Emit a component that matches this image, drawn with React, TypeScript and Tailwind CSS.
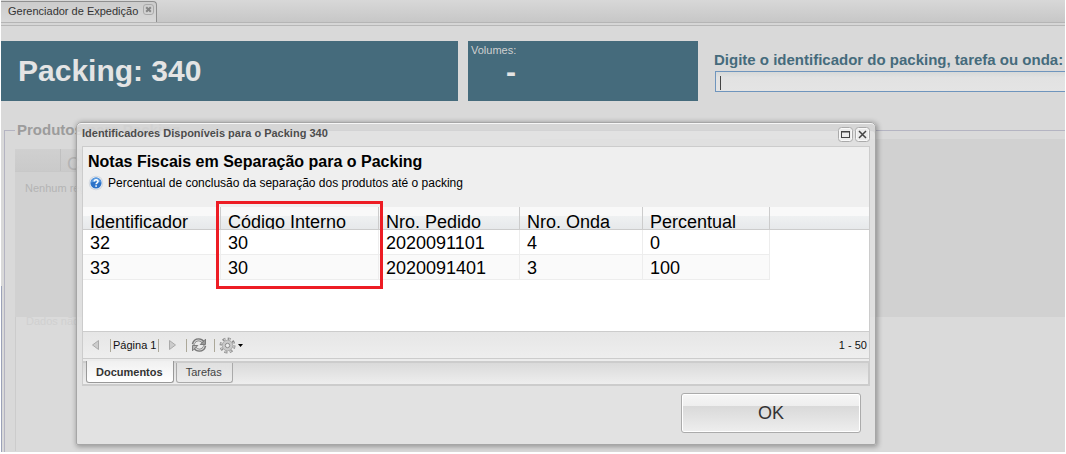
import React, { useState } from 'react';

const COLUMNS = [
    { label: 'Identificador', width: 'w-[138px]' },
    { label: 'Código Interno', width: 'w-[158px]' },
    { label: 'Nro. Pedido', width: 'w-[141px]' },
    { label: 'Nro. Onda', width: 'w-[123px]' },
    { label: 'Percentual', width: 'w-[127px]' },
];

const ROWS = [
    ['32', '30', '2020091101', '4', '0'],
    ['33', '30', '2020091401', '3', '100'],
];

export default function App() {
    return (
        <div className="relative min-h-screen flex flex-col bg-white px-px pb-[2px] overflow-hidden font-['Liberation_Sans',Arial,sans-serif] text-[11px]">
            <div className="flex-1 flex flex-col bg-[#d9d9d9] overflow-hidden">
                <WorkspaceTabs />
                <PackingHeader />
                <ProductsArea />
            </div>
            <PackingDialog />
        </div>
    );
}

const WorkspaceTabs = () => (
    <div className="h-[26px] flex flex-col border-b border-[#b7b7b7] bg-[#d6d6d6]">
        <div className="h-[23px] flex items-end border-b border-[#b5b5b5] bg-linear-to-b from-[#d8d8d8] to-[#c7c7c7]">
            <div className="h-[21px] flex items-start gap-[5px] pl-[7px] pr-[2px] rounded-tr-[4px] border-t border-r border-[#8f8f8f] bg-linear-to-b from-[#cccccc] to-[#d8d8d8]">
                <span className="mt-[2px] leading-[14px] text-[#333333]">Gerenciador de Expedição</span>
                <button aria-label="Fechar aba" className="mt-[2px] text-[#858585]">
                    <svg width="11" height="11" viewBox="0 0 11 11" fill="none">
                        <rect x=".5" y=".5" width="10" height="10" rx="2.5" stroke="#aaaaaa" />
                        <path d="M3.2 3.2l4.6 4.6M7.8 3.2L3.2 7.8" stroke="currentColor" strokeWidth="2" />
                    </svg>
                </button>
            </div>
        </div>
    </div>
);

const PackingHeader = () => (
    <div className="mt-[15px] grid grid-cols-[457fr_230fr_357fr] gap-[10px] h-[60px] shrink-0">
        <div className="flex items-center bg-[#456b7c] pl-[17px]">
            <h1 className="text-[30px] leading-9 font-bold text-[#e4e4e4]">Packing: 340</h1>
        </div>
        <div className="bg-[#456b7c] pl-[3px] pt-[3px] text-[#d0d0d0]">
            <div className="leading-[13px]">Volumes:</div>
            <div className="pl-[35px] text-[30px] leading-[30px] font-bold text-[#e4e4e4]">-</div>
        </div>
        <div className="min-w-0 pl-[6px] pt-[10px]">
            <label htmlFor="packing-id" className="block text-[15px] leading-[18px] font-bold text-[#456b7c] whitespace-nowrap">Digite o identificador do packing, tarefa ou onda:</label>
            <div className="relative mt-[2px] ml-px">
                <input id="packing-id" type="text" className="block w-full h-[21px] px-1 border border-r-0 border-[#6f95bd] bg-linear-to-b from-[#d6d9d9] via-[#e2e2e2] via-30% to-[#e4e4e4] outline-none" />
                {/* text cursor */}
                <span className="absolute left-[5px] top-[5px] w-px h-[14px] bg-[#444444]" />
            </div>
        </div>
    </div>
);

const ProductsArea = () => (
    <div className="flex-1 flex mt-5">
        <div className="w-[3px] mt-[165px] border-l border-[#9ba2b8]" />
        <fieldset className="flex-1 min-w-0 pl-[10px] border-t border-l border-[#b4b4c2]">
            <legend className="px-[2px] text-[15px] leading-[18px] font-bold text-[#9c9c9c]">Produtos para Packing</legend>
            <div className="flex">
                <div className="w-1/2 mt-[10px] h-[168px] bg-[#d1d1d1] text-[#b4b4b4]">
                    <div className="flex h-[23px] bg-linear-to-b from-[#d0d0d0] to-[#cacaca] border-b border-[#c8c8c8] overflow-hidden">
                        <div className="w-[46px] border-r border-[#c0c0c0]" />
                        <div className="pl-[6px] pt-[5px] text-[18px] leading-5">C</div>
                    </div>
                    <div className="pl-[10px] pt-[9px] leading-[14px]">Nenhum registro</div>
                </div>
                <div className="w-1/2 h-[178px] bg-[#d1d1d1]" />
            </div>
            <div className="h-[134px] border-l border-[#cccccc] bg-[#dadada] pl-[10px] text-[#d0d0d0] leading-[8px] overflow-hidden">Dados não encontrados</div>
        </fieldset>
    </div>
);

const PackingDialog = () => (
    <div role="dialog" aria-labelledby="dialog-title" className="absolute left-[76px] top-[122px] w-[800px] flex flex-col px-[5px] pb-[11px] rounded-t-[5px] rounded-b-[2px] border border-[#a6a6a6] bg-[#e3e3e3]/85 shadow-[1px_1px_5px_1px_rgba(0,0,0,0.3),inset_0_1px_0_#f6f6f6,inset_0_8px_0_#cacaca80]">
        <div className="h-[23px] flex items-start justify-between">
            <h2 id="dialog-title" className="pt-[3px] leading-[14px] font-bold text-[#4d4d4d]">Identificadores Disponíveis para o Packing 340</h2>
            <div className="flex gap-[2px] pt-1">
                <WindowButton label="Maximizar">
                    <rect x="3.5" y="4.5" width="8" height="6" />
                    <path d="M3 5h9" />
                </WindowButton>
                <WindowButton label="Fechar">
                    <path d="M4 4l7 7M11 4l-7 7" strokeWidth="1.5" />
                </WindowButton>
            </div>
        </div>
        <div className="border border-[#cccccc] bg-white">
            <div className="h-[60px] pl-[5px] pt-[6px] bg-[#efefef] text-black">
                <h3 className="text-[16px] leading-[18px] font-bold">Notas Fiscais em Separação para o Packing</h3>
                <div className="flex items-center gap-1 pt-1 text-[12px] leading-4">
                    <HelpIcon />
                    <span>Percentual de conclusão da separação dos produtos até o packing</span>
                </div>
            </div>
            <DocumentsGrid />
            <PagingBar />
            <DocumentTabs />
        </div>
        <button className="self-end mt-[7px] mr-[9px] w-[180px] h-10 rounded-[3px] border border-[#ababab] text-[18px] text-[#333333] shadow-[inset_0_0_0_1px_#ffffff] bg-[linear-gradient(#f6f6f6,#eeeeee_32%,#d9d9d9_32%,#eeeeee)]">OK</button>
        {/* highlight around the internal code column */}
        <div className="absolute left-[139px] top-[78px] w-[167px] h-[88px] border-[3px] border-[#ed1c24] pointer-events-none" />
    </div>
);

const WindowButton = ({ label, children }: { label: string; children: React.ReactNode }) => (
    <button aria-label={label} className="block">
        <svg width="15" height="15" viewBox="0 0 15 15" fill="none" stroke="#444444">
            <rect x=".5" y=".5" width="14" height="14" rx="3" fill="#f8f8f8" stroke="#aaaaaa" />
            <rect x="2" y="2" width="11" height="11" rx="1" fill="#ececec" stroke="none" />
            {children}
        </svg>
    </button>
);

const HelpIcon = () => (
    <svg width="16" height="16" viewBox="0 0 16 16">
        <circle cx="8" cy="8" r="7.3" fill="#d3d8df" />
        <circle cx="8" cy="8" r="6.2" fill="#f2f6fb" />
        <circle cx="8" cy="8" r="5.6" fill="#2b72c8" />
        <path d="M3 7.5a5 5 0 0 1 10 0c-3-1-7-1-10 0z" fill="#5b9be0" />
        <path d="M6.2 6.6c0-2.4 3.8-2.4 3.8-.2 0 1.4-1.9 1.5-1.9 2.9" fill="none" stroke="#ffffff" strokeWidth="1.5" />
        <rect x="7.3" y="10.3" width="1.6" height="1.5" fill="#ffffff" />
    </svg>
);

const DocumentsGrid = () => (
    <div className="h-[125px] border-b border-[#cccccc]">
        <table className="w-full table-fixed border-separate border-spacing-0 text-left text-[18px] leading-5 text-black">
            <thead>
                <tr className="bg-[linear-gradient(#f9f9f9_40%,#eff1f2_40%,#e6e8ea)]">
                    {COLUMNS.map((col) => (
                        <th key={col.label} className={`${col.width} p-0 font-normal border-r border-b border-[#cccccc]`}>
                            <div className="h-[22px] pl-[7px] pt-[5px] overflow-hidden">{col.label}</div>
                        </th>
                    ))}
                    <td className="p-0 border-b border-[#cccccc]" />
                </tr>
            </thead>
            <tbody>
                {ROWS.map((row, i) => (
                    <tr key={row[0]}>
                        {row.map((cell, j) => (
                            <td key={j} className={`h-[25px] pt-[2px] pb-0 pl-[7px] pr-0 border-r border-b border-[#ededed] ${i % 2 ? 'bg-[#fafafa]' : 'bg-white'}`}>{cell}</td>
                        ))}
                        <td className="p-0" />
                    </tr>
                ))}
            </tbody>
        </table>
    </div>
);

const Separator = () => <span className="w-px h-[13px] bg-[#aca899]" />;

const PagingBar = () => (
    <div className="h-[27px] flex items-center justify-between pl-[9px] pr-[2px] border-b border-[#cccccc] bg-linear-to-b from-[#e6e6e6] to-[#eeeeee] text-[#111111]">
        <div className="flex items-center">
            <button aria-label="Página anterior">
                <svg width="7" height="10" viewBox="0 0 7 10"><path d="M6.5 .5v9L.5 5z" fill="#cccccc" stroke="#aaaaaa" /></svg>
            </button>
            <div className="flex items-center gap-[2px] ml-[11px]">
                <Separator />
                <span>Página 1</span>
                <Separator />
            </div>
            <button aria-label="Próxima página" className="ml-[10px] mr-[10px]">
                <svg width="7" height="10" viewBox="0 0 7 10"><path d="M.5 .5v9l6-4.5z" fill="#cccccc" stroke="#aaaaaa" /></svg>
            </button>
            <Separator />
            <button aria-label="Atualizar" className="ml-1 mr-[7px]">
                <svg width="16" height="16" viewBox="0 0 16 16" fill="none">
                    <path d="M2.200 7.400C2.800 4.600 5.200 2.800 7.700 2.800c2 0 3.600 1 4.600 2.600" stroke="#777777" strokeWidth="3" />
                    <path d="M2.800 6.900C3.500 4.500 5.400 3 7.700 3c1.800 0 3.200.9 4.200 2.300" stroke="#d6d6d6" strokeWidth="1.200" />
                    <path d="M14.500 2.200v5.300H9.200z" fill="#9a9a9a" stroke="#6a6a6a" strokeWidth=".8" />
                    <path d="M13.800 8.600c-.6 2.800-3 4.600-5.500 4.600-2 0-3.600-1-4.600-2.600" stroke="#777777" strokeWidth="3" />
                    <path d="M13.200 9.100c-.7 2.400-2.600 3.900-4.900 3.900-1.800 0-3.200-.9-4.200-2.300" stroke="#d6d6d6" strokeWidth="1.200" />
                    <path d="M1.500 13.800V8.500h5.300z" fill="#b5b5b5" stroke="#6a6a6a" strokeWidth=".8" />
                </svg>
            </button>
            <Separator />
            <button aria-label="Opções" className="flex items-center gap-[2px] ml-1">
                <svg width="17" height="17" viewBox="0 0 17 17" fill="none">
                    <circle cx="8.5" cy="8.5" r="6.7" stroke="#8c8c8c" strokeWidth="2.6" strokeDasharray="3 2.262" />
                    <circle cx="8.5" cy="8.5" r="6.5" stroke="#c9c9c9" strokeWidth="1.6" strokeDasharray="1.6 3.505" strokeDashoffset="-.7" />
                    <circle cx="8.500" cy="8.500" r="5.200" fill="#c9c9c9" stroke="#a5a5a5" strokeWidth=".8" />
                    <circle cx="8.500" cy="8.500" r="2.200" fill="#ececec" stroke="#8c8c8c" />
                </svg>
                <svg width="5" height="3" viewBox="0 0 5 3"><path d="M0 0h5L2.5 3z" fill="#000000" /></svg>
            </button>
        </div>
        <span>1 - 50</span>
    </div>
);

const DocumentTabs = () => {
    const [active, setActive] = useState('Documentos');
    return (
        <div className="pt-[2px] bg-[#ececec]">
            <div className="h-[24px] flex items-start gap-[2px] pl-[3px] border-t-2 border-b border-r border-[#cccccc] bg-linear-to-b from-[#dadada] to-[#eeeeee]">
                {['Documentos', 'Tarefas'].map((tab) => (
                    <button
                        key={tab}
                        onClick={() => setActive(tab)}
                        className={`px-[9px] rounded-b-[3px] border border-t-0 leading-[14px] ${active === tab ? 'h-[22px] -mt-[2px] pt-1 pb-1 pr-[10px] font-bold text-[#333333] border-[#999999] bg-linear-to-b from-[#f0f0f0] to-white' : 'h-5 pt-[2px] pb-1 pr-[10px] text-[#444444] border-[#aaaaaa] bg-linear-to-b from-[#e0e0e0] to-[#ececec]'}`}
                    >
                        {tab}
                    </button>
                ))}
            </div>
        </div>
    );
};
